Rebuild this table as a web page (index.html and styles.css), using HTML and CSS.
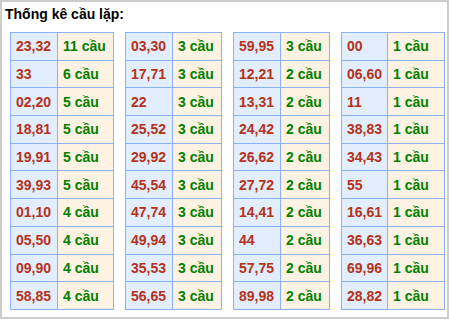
FILE: index.html
```html
<!DOCTYPE html>
<html>
<head>
<meta charset="utf-8">
<link rel="stylesheet" href="styles.css">
</head>
<body>
<div class="box">
  <div class="title">Thống kê cầu lặp:</div>
  <div class="tables">
    <table class="t w1">
      <tr><td class="n">23,32</td><td class="c">11 cầu</td></tr>
      <tr><td class="n">33</td><td class="c">6 cầu</td></tr>
      <tr><td class="n">02,20</td><td class="c">5 cầu</td></tr>
      <tr><td class="n">18,81</td><td class="c">5 cầu</td></tr>
      <tr><td class="n">19,91</td><td class="c">5 cầu</td></tr>
      <tr><td class="n">39,93</td><td class="c">5 cầu</td></tr>
      <tr><td class="n">01,10</td><td class="c">4 cầu</td></tr>
      <tr><td class="n">05,50</td><td class="c">4 cầu</td></tr>
      <tr><td class="n">09,90</td><td class="c">4 cầu</td></tr>
      <tr><td class="n">58,85</td><td class="c">4 cầu</td></tr>
    </table>
    <table class="t w2">
      <tr><td class="n">03,30</td><td class="c">3 cầu</td></tr>
      <tr><td class="n">17,71</td><td class="c">3 cầu</td></tr>
      <tr><td class="n">22</td><td class="c">3 cầu</td></tr>
      <tr><td class="n">25,52</td><td class="c">3 cầu</td></tr>
      <tr><td class="n">29,92</td><td class="c">3 cầu</td></tr>
      <tr><td class="n">45,54</td><td class="c">3 cầu</td></tr>
      <tr><td class="n">47,74</td><td class="c">3 cầu</td></tr>
      <tr><td class="n">49,94</td><td class="c">3 cầu</td></tr>
      <tr><td class="n">35,53</td><td class="c">3 cầu</td></tr>
      <tr><td class="n">56,65</td><td class="c">3 cầu</td></tr>
    </table>
    <table class="t w2">
      <tr><td class="n">59,95</td><td class="c">3 cầu</td></tr>
      <tr><td class="n">12,21</td><td class="c">2 cầu</td></tr>
      <tr><td class="n">13,31</td><td class="c">2 cầu</td></tr>
      <tr><td class="n">24,42</td><td class="c">2 cầu</td></tr>
      <tr><td class="n">26,62</td><td class="c">2 cầu</td></tr>
      <tr><td class="n">27,72</td><td class="c">2 cầu</td></tr>
      <tr><td class="n">14,41</td><td class="c">2 cầu</td></tr>
      <tr><td class="n">44</td><td class="c">2 cầu</td></tr>
      <tr><td class="n">57,75</td><td class="c">2 cầu</td></tr>
      <tr><td class="n">89,98</td><td class="c">2 cầu</td></tr>
    </table>
    <table class="t w1 last">
      <tr><td class="n">00</td><td class="c">1 cầu</td></tr>
      <tr><td class="n">06,60</td><td class="c">1 cầu</td></tr>
      <tr><td class="n">11</td><td class="c">1 cầu</td></tr>
      <tr><td class="n">38,83</td><td class="c">1 cầu</td></tr>
      <tr><td class="n">34,43</td><td class="c">1 cầu</td></tr>
      <tr><td class="n">55</td><td class="c">1 cầu</td></tr>
      <tr><td class="n">16,61</td><td class="c">1 cầu</td></tr>
      <tr><td class="n">36,63</td><td class="c">1 cầu</td></tr>
      <tr><td class="n">69,96</td><td class="c">1 cầu</td></tr>
      <tr><td class="n">28,82</td><td class="c">1 cầu</td></tr>
    </table>
  </div>
</div>
</body>
</html>
```
FILE: styles.css
```css
html, body {
  margin: 0;
  padding: 0;
  background: #ffffff;
}
.box {
  box-sizing: border-box;
  width: 449px;
  height: 319px;
  border: 2px solid #cccccc;
  padding: 3px 0 0 3px;
  font-family: "Liberation Sans", Arial, sans-serif;
}
.title {
  font-weight: bold;
  font-size: 14px;
  line-height: 18px;
  color: #000;
  height: 27px;
}
.tables {
  display: flex;
  gap: 11px;
  padding-left: 5px;
}
.t {
  border-collapse: collapse;
  table-layout: fixed;
}
.t.w1 { width: 104px; }
.t.w2 { width: 97px; }
.t td {
  border: 1px solid #8cb0f5;
  height: 26.7px;
  padding: 0 0 0 5px;
  font-size: 14px;
  font-weight: bold;
  white-space: nowrap;
  vertical-align: middle;
}
.t td.n {
  width: 41px;
  background: #e2edfd;
  color: #b5321a;
}
.t.last td.n {
  width: 40px;
}
.t td.c {
  background: #fef3e2;
  color: #008000;
}
```
